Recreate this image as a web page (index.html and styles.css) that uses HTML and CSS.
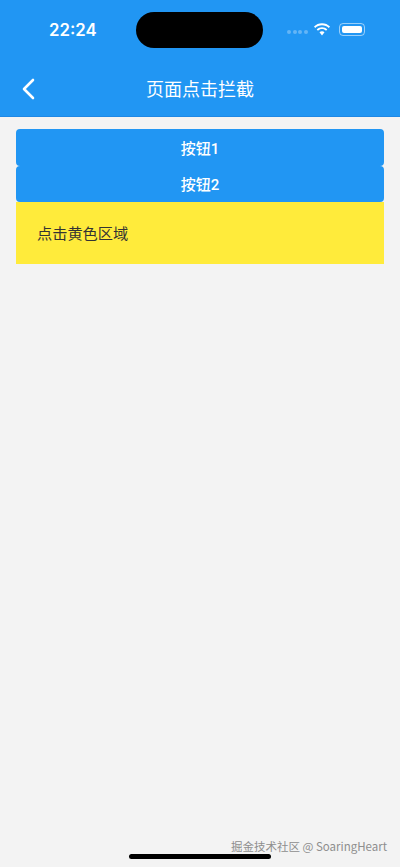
FILE: index.html
```html
<!DOCTYPE html>
<html lang="zh-CN">
<head>
    <meta charset="UTF-8" />
    <meta name="viewport" content="width=device-width, initial-scale=1.0" />
    <title>页面点击拦截</title>
    <link rel="stylesheet" href="styles.css">
</head>
<body>
<div class="screen">
    <header class="header">
        <div class="status-bar">
            <span class="time">22:24</span>
            <span class="island"></span>
            <div class="status-icons">
                <span class="signal"><i></i><i></i><i></i><i></i></span>
                <svg class="wifi" width="18" height="13" viewBox="0 0 18 13">
                    <path d="M9 2.200c2.600 0 5 1 6.800 2.700l1.200-1.300C14.900 1.500 12.100.3 9 .3S3.100 1.500 1 3.600l1.200 1.300C4 3.200 6.400 2.200 9 2.200z" fill="#fff"/>
                    <path d="M9 6.100c1.500 0 2.900.6 4 1.600l1.300-1.300C12.900 5 11 4.200 9 4.200S5.100 5 3.700 6.400L5 7.700c1.100-1 2.500-1.600 4-1.600z" fill="#fff"/>
                    <path d="M9 8.300c-1 0-1.800.4-2.500 1L9 12.600l2.500-3.300c-.7-.6-1.500-1-2.500-1z" fill="#fff"/>
                </svg>
                <span class="battery"><span class="battery-level"></span></span>
            </div>
        </div>
        <div class="nav-bar">
            <svg class="back" width="14" height="22" viewBox="0 0 14 22">
                <path d="M12 2 3 11l9 9" fill="none" stroke="#fff" stroke-width="2.600" stroke-linecap="round" stroke-linejoin="round"/>
            </svg>
            <h1 class="title">页面点击拦截</h1>
        </div>
    </header>

    <main class="content">
        <button class="btn btn-first">按钮1</button>
        <button class="btn">按钮2</button>
        <div class="yellow-area">点击黄色区域</div>
    </main>

    <div class="watermark">掘金技术社区 @ SoaringHeart</div>
    <div class="home-indicator"></div>
</div>
</body>
</html>
```

FILE: styles.css
```css
body {
    margin: 0;
    padding: 0;
    font-family: Roboto, "Noto Sans CJK SC", sans-serif;
    background-color: #F3F3F3;
}

.screen {
    position: relative;
    height: 867px;
    overflow: hidden;
}

.header {
    height: 116px;
    background-color: #2196F3;
    color: #FFFFFF;
    border-bottom: 1px solid #1E88E5;
}

.status-bar {
    display: flex;
    align-items: center;
    height: 36px;
    padding-top: 12px;
}

.time {
    width: 136px;
    padding-left: 49px;
    box-sizing: border-box;
    font-family: Inter, "Liberation Sans", sans-serif;
    font-size: 16.800px;
    font-weight: 600;
}

.island {
    width: 127px;
    height: 36px;
    border-radius: 18px;
    background-color: #000000;
}

.status-icons {
    display: flex;
    align-items: center;
    margin-left: 24px;
    margin-top: -2px;
}

.signal {
    display: flex;
    gap: 1.500px;
    margin-top: 5px;
}

.signal i {
    width: 4px;
    height: 4px;
    border-radius: 50%;
    background-color: rgba(255, 255, 255, 0.3);
}

.wifi {
    margin-left: 5px;
}

.battery {
    display: flex;
    width: 26px;
    height: 13px;
    margin-left: 8px;
    padding: 2px;
    box-sizing: border-box;
    border: 1px solid rgba(255, 255, 255, 0.55);
    border-radius: 4px;
}

.battery-level {
    flex: 1;
    background-color: #FFFFFF;
    border-radius: 2px;
}

.nav-bar {
    display: flex;
    align-items: center;
    height: 44px;
    margin-top: 19px;
    padding-left: 21px;
    position: relative;
}

.title {
    position: absolute;
    left: 0;
    right: 0;
    margin: -2px 0 0;
    text-align: center;
    font-size: 18px;
    font-weight: 400;
}

.content {
    padding: 12px 16px 0;
}

.btn {
    display: block;
    width: 100%;
    height: 36.500px;
    padding: 0;
    border: none;
    border-radius: 4px;
    background-color: #2196F3;
    color: #FFFFFF;
    font-family: inherit;
    font-size: 15px;
    font-weight: 500;
}

.yellow-area {
    height: 62px;
    padding-left: 21px;
    line-height: 64px;
    background-color: #FFEB3B;
    color: #333333;
    font-size: 15.200px;
}

.watermark {
    position: absolute;
    right: 13px;
    bottom: 13px;
    color: #8E8E8E;
    font-family: "Noto Sans CJK SC", sans-serif;
    font-size: 11.500px;
}

.home-indicator {
    position: absolute;
    left: 129px;
    bottom: 8px;
    width: 142px;
    height: 5px;
    border-radius: 3px;
    background-color: #000000;
}
```
